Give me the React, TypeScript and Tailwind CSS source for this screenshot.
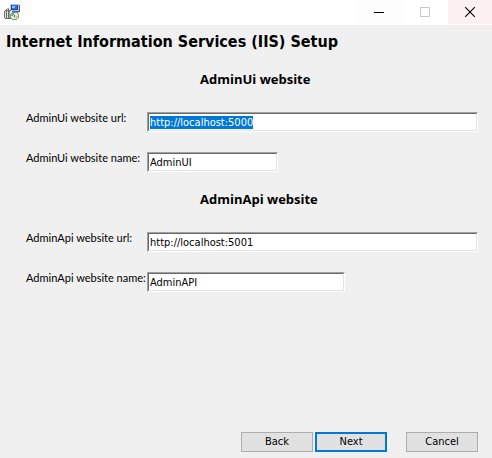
import { useEffect, useRef } from "react";
import type { Ref } from "react";

function InstallerIcon() {
  return (
    <svg viewBox="0 0 16 16" className="h-4 w-4" shapeRendering="crispEdges" aria-hidden="true">
      <path d="M6 0h9v7H6z" fill="#b9c2cc" />
      <path d="M7 1h7v5H7z" fill="#1546b8" />
      <path d="M8 1h5v4H8z" fill="#1f78e6" />
      <path d="M8 2h3v2H8z" fill="#6ccbf8" />
      <path d="M15 1h1v7h-1zM8 7h7v1H8z" fill="#5a6068" />
      <path d="M10 8h5v1h-5z" fill="#9a9a94" />
      <path d="M1 6h6v1H1zM0 7h1v7H0zM1 14h6v1H1z" fill="#6c6c66" />
      <path d="M1 7h6v7H1z" fill="#e4e4de" />
      <path d="M2 5h1v10H2zM4 5h1v10H4z" fill="#6c6c66" />
      <path d="M3 4h2v1H3zM5 7h1v7H5z" fill="#a0a09a" />
      <path d="M8 8h4v1H8zM7 9h1v1H7zM6 10h1v4H6zM7 14h1v1H7zM8 15h5v1H8zM13 9h1v1h-1zM14 10h1v4h-1zM13 14h1v1h-1z" fill="#8b938e" />
      <path d="M8 9h5v1h1v4h-1v1H8v-1H7v-4h1z" fill="#dcebdc" />
      <path d="M8 9h2v2H8zM7 11h2v1H7z" fill="#3fae9c" />
      <path d="M11 13h2v1h-2zM12 12h2v1h-2z" fill="#dcc058" />
      <path d="M10 11h1v2h-1z" fill="#50605a" />
    </svg>
  );
}

function TitleBar() {
  return (
    <header className="flex h-[25px] items-start justify-between bg-white pl-1">
      <div className="pt-1">
        <InstallerIcon />
      </div>
      <div className="flex">
        <button aria-label="Minimize" className="flex h-6 w-[46px] items-center justify-center bg-[#fdfdfd]">
          <svg viewBox="0 0 10 10" className="h-[10px] w-[10px]" shapeRendering="crispEdges">
            <path d="M0 5h10v1H0z" fill="#000" />
          </svg>
        </button>
        <button aria-label="Maximize" disabled className="flex h-6 w-[46px] items-center justify-center">
          <svg viewBox="0 0 10 10" className="h-[10px] w-[10px]" shapeRendering="crispEdges">
            <path d="M.5.5h9v9h-9z" fill="none" stroke="#c8c8c8" />
          </svg>
        </button>
        <button aria-label="Close" className="flex h-6 w-11 items-center justify-center bg-[#fdf0f0]">
          <svg viewBox="0 0 10 10" className="h-[10px] w-[10px]">
            <path d="M0 0l10 10M10 0L0 10" fill="none" stroke="#000" strokeWidth="1.1" />
          </svg>
        </button>
      </div>
    </header>
  );
}

type FieldProps = {
  id: string;
  label: string;
  value: string;
  width: string;
  inputRef?: Ref<HTMLInputElement>;
};

function Field({ id, label, value, width, inputRef }: FieldProps) {
  return (
    <div className="flex h-5 items-start">
      <label htmlFor={id} className="w-[121px] shrink-0 font-['Lato',sans-serif] leading-3 whitespace-nowrap">
        {label}
      </label>
      <div className={`border border-t-[#a0a0a0] border-r-white border-b-white border-l-[#a0a0a0] ${width}`}>
        <input
          ref={inputRef}
          id={id}
          type="text"
          defaultValue={value}
          className="block h-[18px] w-full border border-t-[#696969] border-r-[#e3e3e3] border-b-[#e3e3e3] border-l-[#696969] bg-white px-px leading-[14px] outline-none selection:bg-[#0078d7] selection:text-white"
        />
      </div>
    </div>
  );
}

export default function App() {
  const firstInput = useRef<HTMLInputElement>(null);

  useEffect(() => {
    firstInput.current?.focus();
    firstInput.current?.select();
  }, []);

  return (
    <div className="flex min-h-screen flex-col bg-[#f0f0f0] font-['DejaVu_Sans_Condensed','DejaVu_Sans',sans-serif] text-[11px] text-black">
      <TitleBar />
      <main className="flex grow flex-col pt-[5px]">
        <h1 className="pl-[6px] text-[16px] leading-6 font-bold">Internet Information Services (IIS) Setup</h1>
        <form className="flex grow flex-col">
          <section className="pr-[14px] pl-[26px]">
            <h2 className="mt-[15px] pl-[174px] font-['Open_Sans',sans-serif] text-[13px] leading-5 font-bold">AdminUi website</h2>
            <div className="mt-[23px] flex flex-col gap-5">
              <Field id="ui-url" label="AdminUi website url:" value="http://localhost:5000" width="grow" inputRef={firstInput} />
              <Field id="ui-name" label="AdminUi website name:" value="AdminUI" width="w-[131px]" />
            </div>
          </section>
          <section className="pr-[14px] pl-[26px]">
            <h2 className="mt-[17px] pl-[174px] font-['Open_Sans',sans-serif] text-[13px] leading-5 font-bold">AdminApi website</h2>
            <div className="mt-[23px] flex flex-col gap-5">
              <Field id="api-url" label="AdminApi website url:" value="http://localhost:5001" width="grow" />
              <Field id="api-name" label="AdminApi website name:" value="AdminAPI" width="w-[198px]" />
            </div>
          </section>
          <footer className="mt-auto flex justify-end pr-[14px] pb-[6px]">
            <button type="button" className="h-5 w-[72px] border border-[#adadad] bg-[#e1e1e1] leading-4">Back</button>
            <button type="button" className="ml-[2px] h-5 w-[72px] border-2 border-[#0078d7] bg-[#e1e1e1] leading-4">Next</button>
            <button type="button" className="ml-[19px] h-5 w-[72px] border border-[#adadad] bg-[#e1e1e1] leading-4">Cancel</button>
          </footer>
        </form>
      </main>
    </div>
  );
}
